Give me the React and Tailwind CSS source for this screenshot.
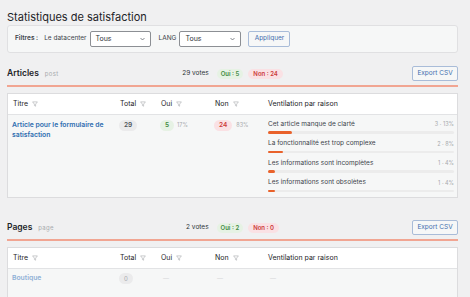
import React from "react"

const reasons = [
    { label: "Cet article manque de clarté", count: 3, pct: 13 },
    { label: "La fonctionnalité est trop complexe", count: 2, pct: 8 },
    { label: "Les informations sont incomplètes", count: 1, pct: 4 },
    { label: "Les informations sont obsolètes", count: 1, pct: 4 },
]

const FunnelIcon = () => (
    <svg width="6" height="6" viewBox="0 0 10 10" className="ml-[4px]">
        <path d="M1 1.5h8L6 5.2V8.7L4 7.6V5.2Z" fill="none" stroke="#a7aaad" strokeWidth="1" strokeLinejoin="round" />
    </svg>
)

const Chevron = () => (
    <svg width="5" height="4" viewBox="0 0 10 6">
        <path d="M1 1l4 4 4-4" fill="none" stroke="#50575e" strokeWidth="1.4" />
    </svg>
)

const Select = ({ width }) => (
    <div className={`flex h-[16px] items-center justify-between rounded-[2px] border border-[#8c8f94] bg-white pl-[5px] pr-[5px] ${width}`}>
        <span className="text-[7px] text-[#2c3338]">Tous</span>
        <Chevron />
    </div>
)

const SectionHeader = ({ name, type, votes, oui, non, className }) => (
    <>
        <div className={`grid h-[15px] grid-cols-[1fr_auto_1fr] items-center ${className}`}>
            <div className="flex items-baseline">
                <span className="text-[8.5px] font-semibold text-[#1d2327]">{name}</span>
                <span className="ml-[6px] text-[6px] tracking-[0.3px] text-[#a7aaad]">{type}</span>
            </div>
            <div className="flex items-center">
                <span className="text-[6.5px] text-[#2c3338]">{votes} votes</span>
                <span className="ml-[8px] flex h-[10px] items-center rounded-full bg-[#e6f2e4] px-[4px] text-[6px] font-semibold text-[#3f8a3f]">Oui : {oui}</span>
                <span className="ml-[5px] flex h-[10px] items-center rounded-full bg-[#fae1e4] px-[5px] text-[6px] font-semibold text-[#cc3a3a]">Non : {non}</span>
            </div>
            <div className="flex justify-end">
                <button className="flex h-[15px] w-[46px] items-center justify-center rounded-[2px] border border-[#a9bcd8] bg-[#f6f7f7] text-[6.5px] text-[#3f6fae]">Export CSV</button>
            </div>
        </div>
        <div className="mt-[4px] h-[2px] bg-[#f1a592]" />
    </>
)

const HeaderRow = () => (
    <div className="grid h-[21px] grid-cols-[107px_41px_54px_53px_1fr] items-center border-b border-[#e2e3e5] bg-white text-[7px] text-[#1d2327]">
        <div className="flex items-center pl-[5px]">Titre<FunnelIcon /></div>
        <div className="flex items-center pl-[5px]">Total<FunnelIcon /></div>
        <div className="flex items-center pl-[5px]">Oui<FunnelIcon /></div>
        <div className="flex items-center pl-[5px]">Non<FunnelIcon /></div>
        <div className="pl-[5px]">Ventilation par raison</div>
    </div>
)

const App = () => {
    return (
        <div className="h-[297px] w-[470px] overflow-hidden bg-[#f0f0f1] font-['Inter','Liberation_Sans',sans-serif]">
            <div className="w-[458px] pl-[7px]">
                <h1 className="pt-[10px] text-[11px] leading-[14px] text-[#1d2327]">Statistiques de satisfaction</h1>

                <div className="mt-[1px] flex h-[28px] items-center rounded-[3px] border border-[#e0e0e2] bg-[#f6f7f7] pl-[7px]">
                    <span className="text-[6.5px] font-semibold text-[#3c434a]">Filtres :</span>
                    <span className="ml-[6px] text-[6.5px] text-[#3c434a]">Le datacenter</span>
                    <div className="ml-[3px]"><Select width="w-[61px]" /></div>
                    <span className="ml-[8px] text-[6.5px] text-[#3c434a]">LANG</span>
                    <div className="ml-[3px]"><Select width="w-[62px]" /></div>
                    <button className="ml-[7px] flex h-[16px] w-[42px] items-center justify-center rounded-[2px] border border-[#a9bcd8] bg-[#f6f7f7] text-[6.5px] text-[#3f6fae]">Appliquer</button>
                </div>

                <SectionHeader name="Articles" type="post" votes={29} oui={5} non={24} className="mt-[13px]" />

                <div className="mt-[6px] border border-[#dcdcde] bg-white">
                    <HeaderRow />
                    <div className="grid grid-cols-[107px_41px_54px_53px_1fr] bg-[#f6f7f7] pb-[5px] pt-[5px]">
                        <div className="pl-[4px] pr-[4px] text-[6.8px] font-semibold leading-[10px] text-[#2f6db0]">Article pour le formulaire de satisfaction</div>
                        <div className="flex items-start pl-[4px]">
                            <span className="flex h-[11px] items-center rounded-full bg-[#ebebec] px-[5px] text-[6.5px] font-semibold text-[#50575e]">29</span>
                        </div>
                        <div className="flex items-start pl-[4px]">
                            <span className="flex h-[11px] items-center rounded-full bg-[#e6f2e4] px-[5px] text-[6.5px] font-semibold text-[#3f8a3f]">5</span>
                            <span className="ml-[3px] flex h-[11px] items-center text-[5.5px] text-[#a7aaad]">17%</span>
                        </div>
                        <div className="flex items-start pl-[4px]">
                            <span className="flex h-[11px] items-center rounded-full bg-[#fae1e4] px-[5px] text-[6.5px] font-semibold text-[#cc3a3a]">24</span>
                            <span className="ml-[4px] flex h-[11px] items-center text-[5.5px] text-[#a7aaad]">83%</span>
                        </div>
                        <div className="flex flex-col gap-[6px] pl-[5px] pr-[3px]">
                            {reasons.map((r) => (
                                <div key={r.label}>
                                    <div className="flex h-[9px] items-center justify-between">
                                        <span className="text-[6.5px] text-[#3c434a]">{r.label}</span>
                                        <span className="text-[5.5px] text-[#a7aaad]">{r.count} · {r.pct}%</span>
                                    </div>
                                    <div className="mt-[2px] h-[2.5px] rounded-full bg-[#ececec]">
                                        <div className="h-full rounded-full bg-[#e9622b]" style={{ width: `${r.pct}%` }} />
                                    </div>
                                </div>
                            ))}
                        </div>
                    </div>
                </div>

                <SectionHeader name="Pages" type="page" votes={2} oui={2} non={0} className="mt-[22px]" />

                <div className="mt-[6px] border border-[#dcdcde] bg-white">
                    <HeaderRow />
                    <div className="grid h-[40px] grid-cols-[107px_41px_54px_53px_1fr] bg-[#f6f7f7] pt-[4px]">
                        <div className="pl-[4px] text-[6.8px] font-semibold leading-[10px] text-[#8fb0d6]">Boutique</div>
                        <div className="flex items-start pl-[4px]">
                            <span className="flex h-[11px] items-center rounded-full bg-[#ebebec] px-[5px] text-[6px] text-[#a7aaad]">0</span>
                        </div>
                        <div className="pl-[7px] text-[6px] leading-[10px] text-[#d5d6d8]">—</div>
                        <div className="pl-[7px] text-[6px] leading-[10px] text-[#d5d6d8]">—</div>
                        <div className="pl-[7px] text-[6px] leading-[10px] text-[#d5d6d8]">—</div>
                    </div>
                </div>
            </div>
        </div>
    )
}

export default App
